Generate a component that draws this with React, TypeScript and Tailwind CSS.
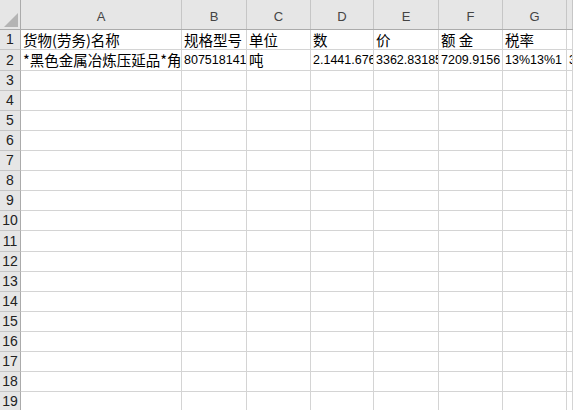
const cols = ["A", "B", "C", "D", "E", "F", "G", ""];
const widths = ["w-[161px]", "w-[65px]", "w-[64px]", "w-[63px]", "w-[65px]", "w-[64px]", "w-[64px]", "flex-1"];

const cjk = "font-['Noto_Sans_CJK_SC',sans-serif] text-[14.5px]";
const num = "font-['Liberation_Sans',sans-serif] text-[12.5px]";

type Cell = { text: string; font: string };

const rows: Cell[][] = [
  [
    { text: "货物(劳务)名称", font: cjk },
    { text: "规格型号", font: cjk },
    { text: "单位", font: cjk },
    { text: "数", font: cjk },
    { text: "价", font: cjk },
    { text: "额 金", font: cjk },
    { text: "税率", font: cjk },
    { text: "", font: cjk },
  ],
  [
    { text: "*黑色金属冶炼压延品*角钢", font: cjk },
    { text: "807518141", font: num },
    { text: "吨", font: cjk },
    { text: "2.1441.6763", font: num },
    { text: "3362.83185", font: num },
    { text: "7209.9156", font: num },
    { text: "13%13%1", font: num },
    { text: "3%13%", font: num },
  ],
];

const App = () => {
  const rowNums = Array.from({ length: 19 }, (_, i) => i + 1);

  return (
    <div className="w-[573px] h-[410px] overflow-hidden bg-white select-none">
      {/* column headers */}
      <div className="flex h-[30px] bg-[#e6e6e6] border-b border-[#ababab]">
        <div className="w-[21px] shrink-0 border-r border-[#ababab] relative">
          <svg className="absolute left-[4px] top-[13px]" width="14" height="14" viewBox="0 0 14 14">
            <polygon points="14,0 14,14 0,14" fill="#b4b4b4" />
          </svg>
        </div>
        {cols.map((c, i) => (
          <div
            key={i}
            className={`${widths[i]} shrink-0 border-r border-[#c6c6c6] flex items-end justify-center pb-[3px] text-[13px] text-[#444] font-['Liberation_Sans',sans-serif]`}
          >
            {c}
          </div>
        ))}
      </div>

      {rowNums.map((n) => {
        const data = rows[n - 1];
        const tall = n === 2 || n === 11;
        return (
          <div key={n} className={`flex ${tall ? "h-[21px]" : "h-[20px]"} border-b border-[#d4d4d4]`}>
            <div className="w-[21px] shrink-0 bg-[#e6e6e6] border-r border-[#ababab] flex items-center justify-center text-[14px] text-[#222] font-['Liberation_Sans',sans-serif] -mb-px border-b border-b-[#c6c6c6]">
              {n}
            </div>
            {widths.map((w, i) => (
              <div
                key={i}
                className={`${w} shrink-0 border-r border-[#d4d4d4] overflow-hidden whitespace-nowrap flex items-center pl-[2px] text-black ${data ? data[i].font : ""}`}
              >
                {data ? data[i].text : ""}
              </div>
            ))}
          </div>
        );
      })}
    </div>
  );
};

export default App;
